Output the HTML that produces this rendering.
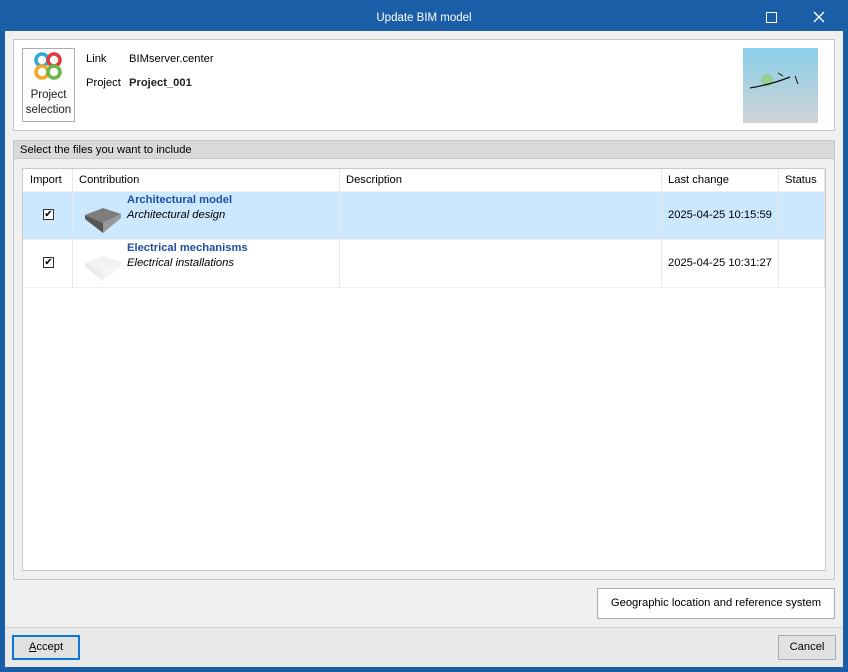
<!DOCTYPE html>
<html><head><style>
*{box-sizing:border-box;margin:0;padding:0}
body{width:848px;height:672px;background:#1a5ea8;font-family:"Liberation Sans",sans-serif;font-size:11.2px;color:#000;position:relative;overflow:hidden}
.abs{position:absolute}
.title{left:0;top:0;width:848px;height:36px;color:#fff;text-align:center;line-height:36px;font-size:11.5px}
.client{left:5px;top:31px;width:838px;height:636px;background:#f0f0f0}
.b{border:1px solid #c8c8c8}
</style></head><body>
<div class="abs title">Update BIM model</div>
<div class="abs" style="left:766px;top:12px;width:11px;height:11px;border:1px solid #fff"></div>
<svg class="abs" style="left:813px;top:11px" width="12" height="12"><path d="M1 1L11 11M11 1L1 11" stroke="#fff" stroke-width="1.4"/></svg>
<div class="abs client"></div>
<div class="abs b" style="left:13px;top:39px;width:822px;height:92px;background:#fff"></div>
<div class="abs" style="left:22px;top:48px;width:53px;height:74px;border:1px solid #adadad;background:#fdfdfd;text-align:center;font-size:11.5px;line-height:15px;color:#222;padding-top:39px">Project<br>selection</div>
<svg class="abs" style="left:31px;top:51px" width="36" height="34">
<circle cx="11" cy="9" r="6" fill="none" stroke="#2aa9d9" stroke-width="3.5"/>
<circle cx="23" cy="9" r="6" fill="none" stroke="#e03a3a" stroke-width="3.5"/>
<circle cx="11" cy="21" r="6" fill="none" stroke="#f2a72b" stroke-width="3.5"/>
<circle cx="23" cy="21" r="6" fill="none" stroke="#6cb646" stroke-width="3.5"/>
</svg>
<div class="abs" style="left:86px;top:53px">Link</div>
<div class="abs" style="left:129px;top:53px">BIMserver.center</div>
<div class="abs" style="left:86px;top:77px">Project</div>
<div class="abs" style="left:129px;top:77px;font-weight:bold;color:#222">Project_001</div>
<div class="abs" style="left:743px;top:48px;width:75px;height:75px;background:linear-gradient(#8bcfea,#cfd3d6)"></div>
<svg class="abs" style="left:743px;top:48px" width="75" height="75"><circle cx="24" cy="32" r="6" fill="#8fd07a" opacity=".8"/><path d="M7 40Q30 36 47 29" stroke="#111" fill="none" stroke-width="1.3"/><path d="M35 25L40 28M52 28L55 36" stroke="#333" stroke-width="1.2"/></svg>
<div class="abs" style="left:13px;top:140px;width:822px;height:19px;background:#d9d9d9;border:1px solid #c8c8c8;padding:2px 6px;line-height:14px">Select the files you want to include</div>
<div class="abs b" style="left:13px;top:158px;width:822px;height:422px;border-top:none"></div>
<div class="abs b" style="left:22px;top:168px;width:804px;height:403px;background:#fff"></div>
<div class="abs" style="left:23px;top:192px;width:801px;height:47px;background:#cce8ff"></div>
<div class="abs" style="left:23px;top:287px;width:801px;height:1px;background:#f0f0f0"></div>
<div class="abs" style="left:23px;top:239px;width:801px;height:1px;background:#f0f0f0"></div>
<div class="abs" style="left:23px;top:191px;width:801px;height:1px;background:#f0f0f0"></div>
<div class="abs" style="left:72px;top:169px;width:1px;height:119px;background:#e8e8e8"></div>
<div class="abs" style="left:339px;top:169px;width:1px;height:119px;background:#e8e8e8"></div>
<div class="abs" style="left:661px;top:169px;width:1px;height:119px;background:#e8e8e8"></div>
<div class="abs" style="left:778px;top:169px;width:1px;height:119px;background:#e8e8e8"></div>
<div class="abs" style="left:824px;top:169px;width:1px;height:119px;background:#e8e8e8"></div>
<div class="abs" style="left:30px;top:174px">Import</div>
<div class="abs" style="left:79px;top:174px">Contribution</div>
<div class="abs" style="left:346px;top:174px">Description</div>
<div class="abs" style="left:668px;top:174px">Last change</div>
<div class="abs" style="left:785px;top:174px">Status</div>
<div class="abs" style="left:43px;top:209px;width:11px;height:11px;border:1px solid #333;background:#fff;font-size:10px;line-height:9px;text-align:center">✔</div>
<div class="abs" style="left:43px;top:257px;width:11px;height:11px;border:1px solid #333;background:#fff;font-size:10px;line-height:9px;text-align:center">✔</div>
<svg class="abs" style="left:83px;top:205px" width="40" height="30"><path d="M2 10L20 3L38 9L20 18Z" fill="#7d7d7d"/><path d="M2 10L20 18L20 28L2 14Z" fill="#555"/><path d="M20 18L38 9L38 13L20 28Z" fill="#999"/></svg>
<svg class="abs" style="left:83px;top:253px" width="40" height="30"><path d="M2 10L20 3L38 9L20 18Z" fill="#f2f2f2"/><path d="M2 10L20 18L20 28L2 14Z" fill="#ececec"/><path d="M20 18L38 9L38 13L20 28Z" fill="#f5f5f5"/></svg>
<div class="abs" style="left:127px;top:194px;font-weight:bold;color:#1f4ea3">Architectural model</div>
<div class="abs" style="left:127px;top:209px;font-style:italic">Architectural design</div>
<div class="abs" style="left:127px;top:242px;font-weight:bold;color:#1f4ea3">Electrical mechanisms</div>
<div class="abs" style="left:127px;top:257px;font-style:italic">Electrical installations</div>
<div class="abs" style="left:668px;top:209px">2025-04-25 10:15:59</div>
<div class="abs" style="left:668px;top:257px">2025-04-25 10:31:27</div>
<div class="abs" style="left:597px;top:588px;width:238px;height:31px;border:1px solid #adadad;background:#fdfdfd;text-align:center;line-height:29px">Geographic location and reference system</div>
<div class="abs" style="left:5px;top:627px;width:838px;height:40px;background:#e9e9e9;border-top:1px solid #d4d4d4"></div>
<div class="abs" style="left:12px;top:635px;width:68px;height:25px;border:2px solid #0a78d7;background:#e1e1e1;text-align:center;line-height:21px"><u>A</u>ccept</div>
<div class="abs" style="left:778px;top:635px;width:58px;height:25px;border:1px solid #adadad;background:#e1e1e1;text-align:center;line-height:23px">Cancel</div>
</body></html>
